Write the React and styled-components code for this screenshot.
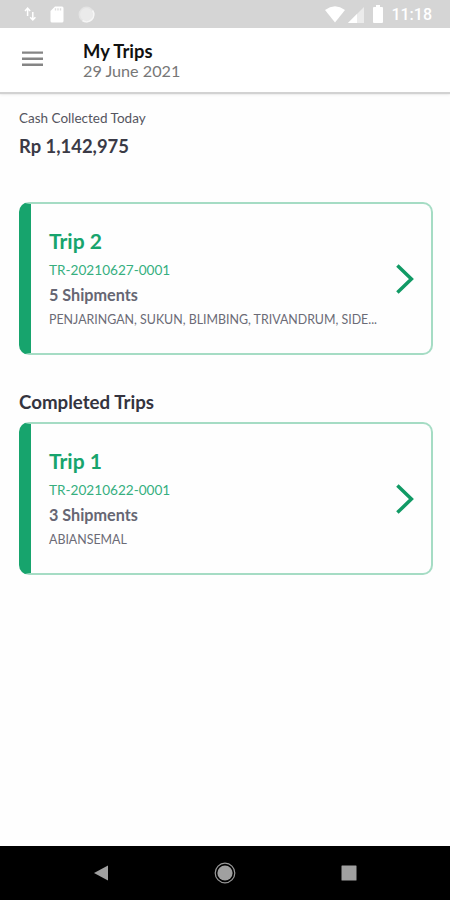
import React from "react";
import styled, { createGlobalStyle } from "styled-components";

const trips = [
  {
    id: "TR-20210627-0001",
    title: "Trip 2",
    shipments: 5,
    areas: "PENJARINGAN, SUKUN, BLIMBING, TRIVANDRUM, SIDE...",
  },
];

const completedTrips = [
  {
    id: "TR-20210622-0001",
    title: "Trip 1",
    shipments: 3,
    areas: "ABIANSEMAL",
  },
];

const TripItem = ({ trip }) => {
  const { id, title, shipments, areas } = trip;
  return (
    <TripCard>
      <TripInfo>
        <TripTitle>{title}</TripTitle>
        <TripId>{id}</TripId>
        <Shipments>{shipments} Shipments</Shipments>
        <Areas>{areas}</Areas>
      </TripInfo>
      <Chevron viewBox="0 0 18 30">
        <path d="M1.4 1.4L15.4 15L1.4 28.6" />
      </Chevron>
    </TripCard>
  );
};

export default function App() {
  return (
    <>
      <GlobalStyle />
      <Screen>
        <StatusBar>
          <StatusLeft>
            <svg width="12" height="16" viewBox="0 0 12 16">
              <path d="M3.6 10V2.5M1 5L3.6 2.2L6.2 5M8.8 6V13.6M6.2 11.2L8.8 14L11.4 11.2" fill="none" stroke="#fff" strokeWidth="1.5" />
            </svg>
            <svg width="14" height="17" viewBox="0 0 14 17">
              <path d="M5 0.5H12Q13.5 0.5 13.5 2V15Q13.5 16.5 12 16.5H2Q0.5 16.5 0.5 15V5Z" fill="#fff" />
              <path d="M5.5 2.2V4.4M8 2.2V4.4M10.5 2.2V4.4" stroke="#dedede" strokeWidth="1.4" />
            </svg>
            <svg width="17" height="17" viewBox="0 0 17 17">
              <circle cx="8.5" cy="8.5" r="7.2" fill="#ebebeb" stroke="#e4e4e4" strokeWidth="1.5" />
              <path d="M14.5 4.5A7.2 7.2 0 0 1 4.5 14.5" fill="none" stroke="#f6f6f6" strokeWidth="1.6" />
            </svg>
          </StatusLeft>
          <StatusRight>
            <svg width="20" height="17" viewBox="0 0 20 17">
              <path d="M0 4Q10 -3.4 20 4L10 16.5Z" fill="#fff" />
            </svg>
            <svg width="16" height="16" viewBox="0 0 16 16">
              <path d="M16 0V16H0Z" fill="#ebebeb" />
              <path d="M9 7V16H0Z" fill="#fff" />
            </svg>
            <svg width="10" height="18" viewBox="0 0 10 18">
              <path d="M3 0H7V2H9Q10 2 10 3V17Q10 18 9 18H1Q0 18 0 17V3Q0 2 1 2H3Z" fill="#fff" />
            </svg>
            <Clock>11:18</Clock>
          </StatusRight>
        </StatusBar>
        <Header>
          <MenuIcon width="21" height="16" viewBox="0 0 21 16">
            <path d="M0 1.6H21M0 7.8H21M0 13.8H21" />
          </MenuIcon>
          <div>
            <Title>My Trips</Title>
            <DateText>29 June 2021</DateText>
          </div>
        </Header>
        <Content>
          <CashLabel>Cash Collected Today</CashLabel>
          <CashAmount>Rp 1,142,975</CashAmount>
          {trips.map((trip) => (
            <TripItem key={trip.id} trip={trip} />
          ))}
          <SectionTitle>Completed Trips</SectionTitle>
          {completedTrips.map((trip) => (
            <TripItem key={trip.id} trip={trip} />
          ))}
        </Content>
        <NavBar>
          <svg width="16" height="18" viewBox="0 0 16 18">
            <path d="M1 9L15 1.5V16.5Z" fill="#a0a0a0" />
          </svg>
          <svg width="22" height="22" viewBox="0 0 22 22">
            <circle cx="11" cy="11" r="9.8" fill="none" stroke="#999" strokeWidth="1.2" />
            <circle cx="11" cy="11" r="7.6" fill="#a0a0a0" />
          </svg>
          <svg width="16" height="16" viewBox="0 0 16 16">
            <rect x="0.5" y="0.5" width="15" height="15" rx="0.5" fill="#a0a0a0" />
          </svg>
        </NavBar>
      </Screen>
    </>
  );
}

const GlobalStyle = createGlobalStyle`
  * {
    box-sizing: border-box;
  }
  body {
    margin: 0;
    background: #fff;
    font-family: Lato, "Liberation Sans", sans-serif;
  }
  h1, h2, h3, p {
    margin: 0;
  }
  svg {
    display: block;
    flex-shrink: 0;
  }
`;

const Screen = styled.div`
  width: 450px;
  height: 900px;
  display: flex;
  flex-direction: column;
  overflow: hidden;
  background: #fefefe;
`;

const StatusBar = styled.div`
  height: 28px;
  flex-shrink: 0;
  display: flex;
  align-items: center;
  justify-content: space-between;
  padding: 0 18px 0 24px;
  background: #d5d5d5;
`;

const StatusLeft = styled.div`
  display: flex;
  align-items: center;
  gap: 14px;
`;

const StatusRight = styled.div`
  display: flex;
  align-items: center;
  svg:nth-child(2) {
    margin: 1px 9px 0 3px;
  }
`;

const Clock = styled.span`
  margin-left: 8px;
  padding-top: 2px;
  font-family: Roboto, sans-serif;
  font-size: 16px;
  font-weight: 500;
  line-height: 20px;
  color: #fff;
`;

const Header = styled.header`
  height: 64px;
  flex-shrink: 0;
  display: flex;
  padding: 12px 0 0 22px;
  background: #fff;
  box-shadow: 0 2px 1px #d2d2d2, 0 3px 3px rgba(0, 0, 0, 0.06);
`;

const MenuIcon = styled.svg`
  margin: 11px 40px 0 0;
  fill: none;
  stroke: #858585;
  stroke-width: 2.4;
`;

const Title = styled.h1`
  font-size: 18.4px;
  line-height: 22px;
  font-weight: 700;
  color: #111;
`;

const DateText = styled.p`
  font-size: 16.2px;
  line-height: 17px;
  color: #777;
`;

const Content = styled.main`
  flex: 1;
  padding: 17px 17px 0 19px;
`;

const CashLabel = styled.p`
  font-size: 13.5px;
  line-height: 18px;
  color: #555560;
`;

const CashAmount = styled.p`
  margin: 7px 0 43px;
  font-size: 18.4px;
  line-height: 25px;
  font-weight: 700;
  color: #3a3a46;
`;

const SectionTitle = styled.h2`
  margin: 34px 0 7px;
  font-size: 18.7px;
  line-height: 26px;
  font-weight: 700;
  color: #34343f;
`;

const TripCard = styled.section`
  height: 153px;
  display: flex;
  align-items: center;
  justify-content: space-between;
  padding-right: 17px;
  border: 2px solid #a5dcc4;
  border-left: 12px solid #17a46d;
  border-radius: 10px;
`;

const TripInfo = styled.div`
  padding: 3px 0 0 18px;
  white-space: nowrap;
`;

const TripTitle = styled.h3`
  font-size: 21px;
  line-height: 30px;
  font-weight: 700;
  color: #17a46d;
`;

const TripId = styled.p`
  font-size: 13.6px;
  line-height: 28px;
  color: #36af7e;
`;

const Shipments = styled.p`
  font-size: 16.2px;
  line-height: 22px;
  font-weight: 700;
  color: #666673;
`;

const Areas = styled.p`
  font-size: 12.4px;
  line-height: 28px;
  color: #6b6b76;
`;

const Chevron = styled.svg`
  width: 18px;
  height: 30px;
  fill: none;
  stroke: #119a65;
  stroke-width: 3.5;
`;

const NavBar = styled.nav`
  height: 54px;
  flex-shrink: 0;
  display: flex;
  align-items: center;
  justify-content: space-between;
  padding: 0 93px;
  background: #000;
`;
